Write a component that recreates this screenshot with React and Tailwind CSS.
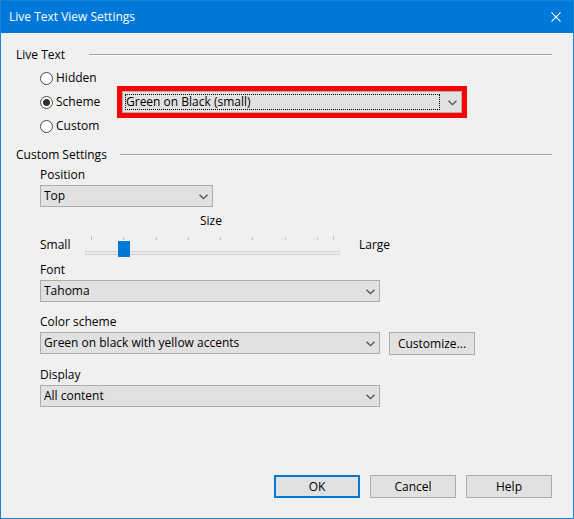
import React from "react";

const TICKS = [0, 4, 8, 12, 16, 20, 24, 28, 30];

function Chevron() {
  return (
    <svg
      className="pointer-events-none absolute top-[9px] right-[5px] h-[6px] w-[9px]"
      viewBox="0 0 9 6"
      fill="none"
      stroke="#505050"
      strokeWidth="1.3"
      aria-hidden="true"
    >
      <path d="M0.5 0.7 4.5 4.7 8.5 0.7" />
    </svg>
  );
}

function Select({ focused, value, ...props }) {
  return (
    <div className="relative h-[22px] w-full">
      <select
        className="block h-[22px] w-full appearance-none rounded-none border border-[#adadad] bg-[#e1e1e1] pr-5 pl-[3px] leading-5 text-black outline-none"
        defaultValue={value}
        {...props}
      >
        <option>{value}</option>
      </select>
      {focused && (
        <span className="pointer-events-none absolute top-[3px] right-[22px] bottom-[3px] left-[3px] border border-dotted border-black" />
      )}
      <Chevron />
    </div>
  );
}

function Field({ id, label, value }) {
  return (
    <>
      <label htmlFor={id} className="block h-5 leading-5">
        {label}
      </label>
      <Select id={id} value={value} />
    </>
  );
}

function Heading({ id, children }) {
  return (
    <div className="flex h-5 items-center gap-[13px]">
      <h2 id={id} className="min-w-[60px] leading-5">
        {children}
      </h2>
      <hr className="h-[2px] flex-1 border-t border-b border-t-[#a0a0a0] border-b-white" />
    </div>
  );
}

function Radio({ label, checked }) {
  return (
    <label className="flex h-6 items-center gap-[3px]">
      <input
        type="radio"
        name="mode"
        defaultChecked={checked}
        className="size-[13px] appearance-none rounded-full border border-[#4a4a4a] bg-white checked:bg-[radial-gradient(circle,#303030_3px,#fff_4px)]"
      />
      <span className="leading-5">{label}</span>
    </label>
  );
}

function Button({ primary, children }) {
  return (
    <button
      type="button"
      className={
        primary
          ? "h-[23px] w-[86px] border-2 border-[#0078d7] bg-[#e1e1e1] leading-[19px]"
          : "h-[23px] w-[86px] border border-[#adadad] bg-[#e1e1e1] leading-[21px]"
      }
    >
      {children}
    </button>
  );
}

export default function App() {
  return (
    <div
      role="dialog"
      aria-labelledby="title"
      className="flex min-h-screen w-full flex-col border border-[#1883d7] bg-[#f0f0f0] font-['Open_Sans','Noto_Sans',sans-serif] text-[12px] text-black"
    >
      <header className="flex h-8 items-center justify-between bg-[#0078d7] pr-3 pl-2 text-white">
        <h1 id="title" className="leading-5">
          Live Text View Settings
        </h1>
        <button type="button" aria-label="Close" className="size-[10px]">
          <svg viewBox="0 0 10 10" className="size-[10px]" stroke="#fff" strokeWidth="1.1">
            <path d="M0.4 0.4 9.6 9.6M9.6 0.4 0.4 9.6" />
          </svg>
        </button>
      </header>

      <main className="flex flex-1 flex-col pt-3 pr-[21px] pb-5 pl-[15px]">
        <section aria-labelledby="live">
          <Heading id="live">Live Text</Heading>
          <div className="flex items-center gap-4 pt-px pr-[85px] pl-6">
            <div className="w-[61px]">
              <Radio label="Hidden" />
              <Radio label="Scheme" checked />
              <Radio label="Custom" />
            </div>
            <div className="flex-1 border-[5px] border-[#ff0000]">
              <Select value="Green on Black (small)" aria-label="Scheme" focused />
            </div>
          </div>
        </section>

        <section aria-labelledby="custom" className="pt-[7px]">
          <Heading id="custom">Custom Settings</Heading>
          <div className="flex flex-col pl-6">
            <div className="w-[173px]">
              <Field id="position" label="Position" value="Top" />
            </div>

            <div className="pt-1 pb-[2px]">
              <label htmlFor="size" className="block w-[342px] text-center leading-5">
                Size
              </label>
              <div className="flex items-center">
                <span className="w-[45px] leading-5">Small</span>
                <div className="w-[255px] pt-[5px]">
                  <svg className="block h-1 w-full" viewBox="0 0 255 4" fill="#c4c4c4" aria-hidden="true">
                    {TICKS.map((t) => {
                      const end = t === 0 || t === 30;
                      return (
                        <rect
                          key={t}
                          x={Math.round(6 + (t * 242) / 30)}
                          y={end ? 0 : 1}
                          width="1"
                          height={end ? 4 : 3}
                        />
                      );
                    })}
                  </svg>
                  <input
                    id="size"
                    type="range"
                    min="0"
                    max="30"
                    defaultValue="4"
                    className="mt-[2px] block h-4 w-full appearance-none bg-transparent [&::-webkit-slider-runnable-track]:mt-[6px] [&::-webkit-slider-runnable-track]:h-1 [&::-webkit-slider-runnable-track]:border [&::-webkit-slider-runnable-track]:border-[#d6d6d6] [&::-webkit-slider-runnable-track]:bg-[#e7eaea] [&::-webkit-slider-thumb]:-mt-[11px] [&::-webkit-slider-thumb]:h-4 [&::-webkit-slider-thumb]:w-3 [&::-webkit-slider-thumb]:appearance-none [&::-webkit-slider-thumb]:bg-[#0078d7]"
                  />
                </div>
                <span className="pl-[19px] leading-5">Large</span>
              </div>
            </div>

            <div className="max-w-[340px]">
              <Field id="font" label="Font" value="Tahoma" />
            </div>

            <div className="flex items-start gap-[9px] pt-[10px]">
              <div className="max-w-[340px] flex-1">
                <Field id="colors" label="Color scheme" value="Green on black with yellow accents" />
              </div>
              <div className="pt-5">
                <Button>Customize...</Button>
              </div>
            </div>

            <div className="max-w-[340px] pt-[10px]">
              <Field id="display" label="Display" value="All content" />
            </div>
          </div>
        </section>

        <footer className="mt-auto flex justify-end gap-[10px]">
          <Button primary>OK</Button>
          <Button>Cancel</Button>
          <Button>Help</Button>
        </footer>
      </main>
    </div>
  );
}
